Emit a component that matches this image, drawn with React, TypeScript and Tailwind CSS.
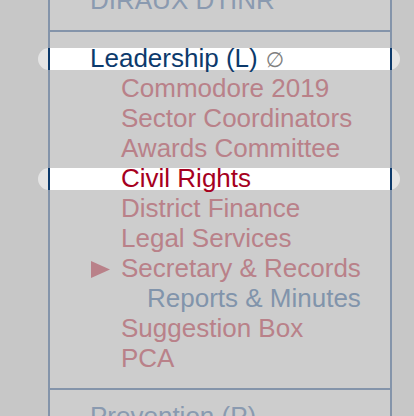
import React from "react";

type Item = { label: string; tone?: "muted" | "active" | "sub"; marker?: boolean };

const items: Item[] = [
  { label: "Commodore 2019" },
  { label: "Sector Coordinators" },
  { label: "Awards Committee" },
  { label: "Civil Rights", tone: "active" },
  { label: "District Finance" },
  { label: "Legal Services" },
  { label: "Secretary & Records", marker: true },
  { label: "Reports & Minutes", tone: "sub" },
  { label: "Suggestion Box" },
  { label: "PCA" },
];

function Highlight() {
  return (
    <>
      <div className="absolute left-[-12px] right-[-10px] top-[5px] h-[22px] rounded-full bg-[#e4e4e4]" />
      <div className="absolute left-0 right-0 top-[5px] h-[22px] bg-white" />
      <div className="absolute left-[-2px] top-[5px] h-[22px] w-[2px] bg-[#0c3a6c]" />
      <div className="absolute right-[-2px] top-[5px] h-[22px] w-[2px] bg-[#0c3a6c]" />
    </>
  );
}

function MenuRow({ item }: { item: Item }) {
  if (item.tone === "sub") {
    return <div className="h-[30px] pl-[97px] text-[#8194ab]">{item.label}</div>;
  }
  if (item.marker) {
    return (
      <div className="flex h-[30px] items-center pl-[41px] text-[#b98189]">
        <svg width="19" height="17" viewBox="0 0 19 17" className="mt-[3px] shrink-0">
          <polygon points="0,0 19,8.5 0,17" fill="#b98189" />
        </svg>
        <span className="ml-[11px]">{item.label}</span>
      </div>
    );
  }
  if (item.tone === "active") {
    return (
      <div className="relative h-[30px]">
        <Highlight />
        <div className="relative pl-[71px] text-[#a6001e]">{item.label}</div>
      </div>
    );
  }
  return <div className="h-[30px] pl-[71px] text-[#b98189]">{item.label}</div>;
}

export default function App() {
  return (
    <div
      className="h-[416px] w-[414px] overflow-hidden bg-[#c7c7c7] text-[26px] leading-[30px]"
      style={{ fontFamily: '"Liberation Sans", Arial, sans-serif' }}
    >
      <div className="ml-[48px] flex h-full w-[344px] flex-col border-x-2 border-[#8494aa] bg-[#cdcdcd]">
        {/* previous section, cut off */}
        <div className="h-[32px] shrink-0 border-b-2 border-[#8494aa]">
          <div className="relative top-[-15px] pl-[40px] text-[#8a9ab0]">DIRAUX DTINR</div>
        </div>

        {/* Leadership section */}
        <div className="shrink-0 border-b-2 border-[#8494aa] pb-[15px] pt-[11px]">
          <div className="relative h-[30px]">
            <Highlight />
            <div className="relative flex items-baseline pl-[40px] text-[#0c3a6c]">
              <span>Leadership (L)</span>
              <span
                className="ml-[8px] text-[21px] text-[#808080]"
                style={{ fontFamily: '"DejaVu Sans", sans-serif' }}
              >
                ∅
              </span>
            </div>
          </div>
          {items.map((item) => (
            <MenuRow key={item.label} item={item} />
          ))}
        </div>

        {/* next section, cut off */}
        <div className="shrink-0 pt-[11px] pl-[40px] text-[#8a9ab0]">Prevention (P)</div>
      </div>
    </div>
  );
}
